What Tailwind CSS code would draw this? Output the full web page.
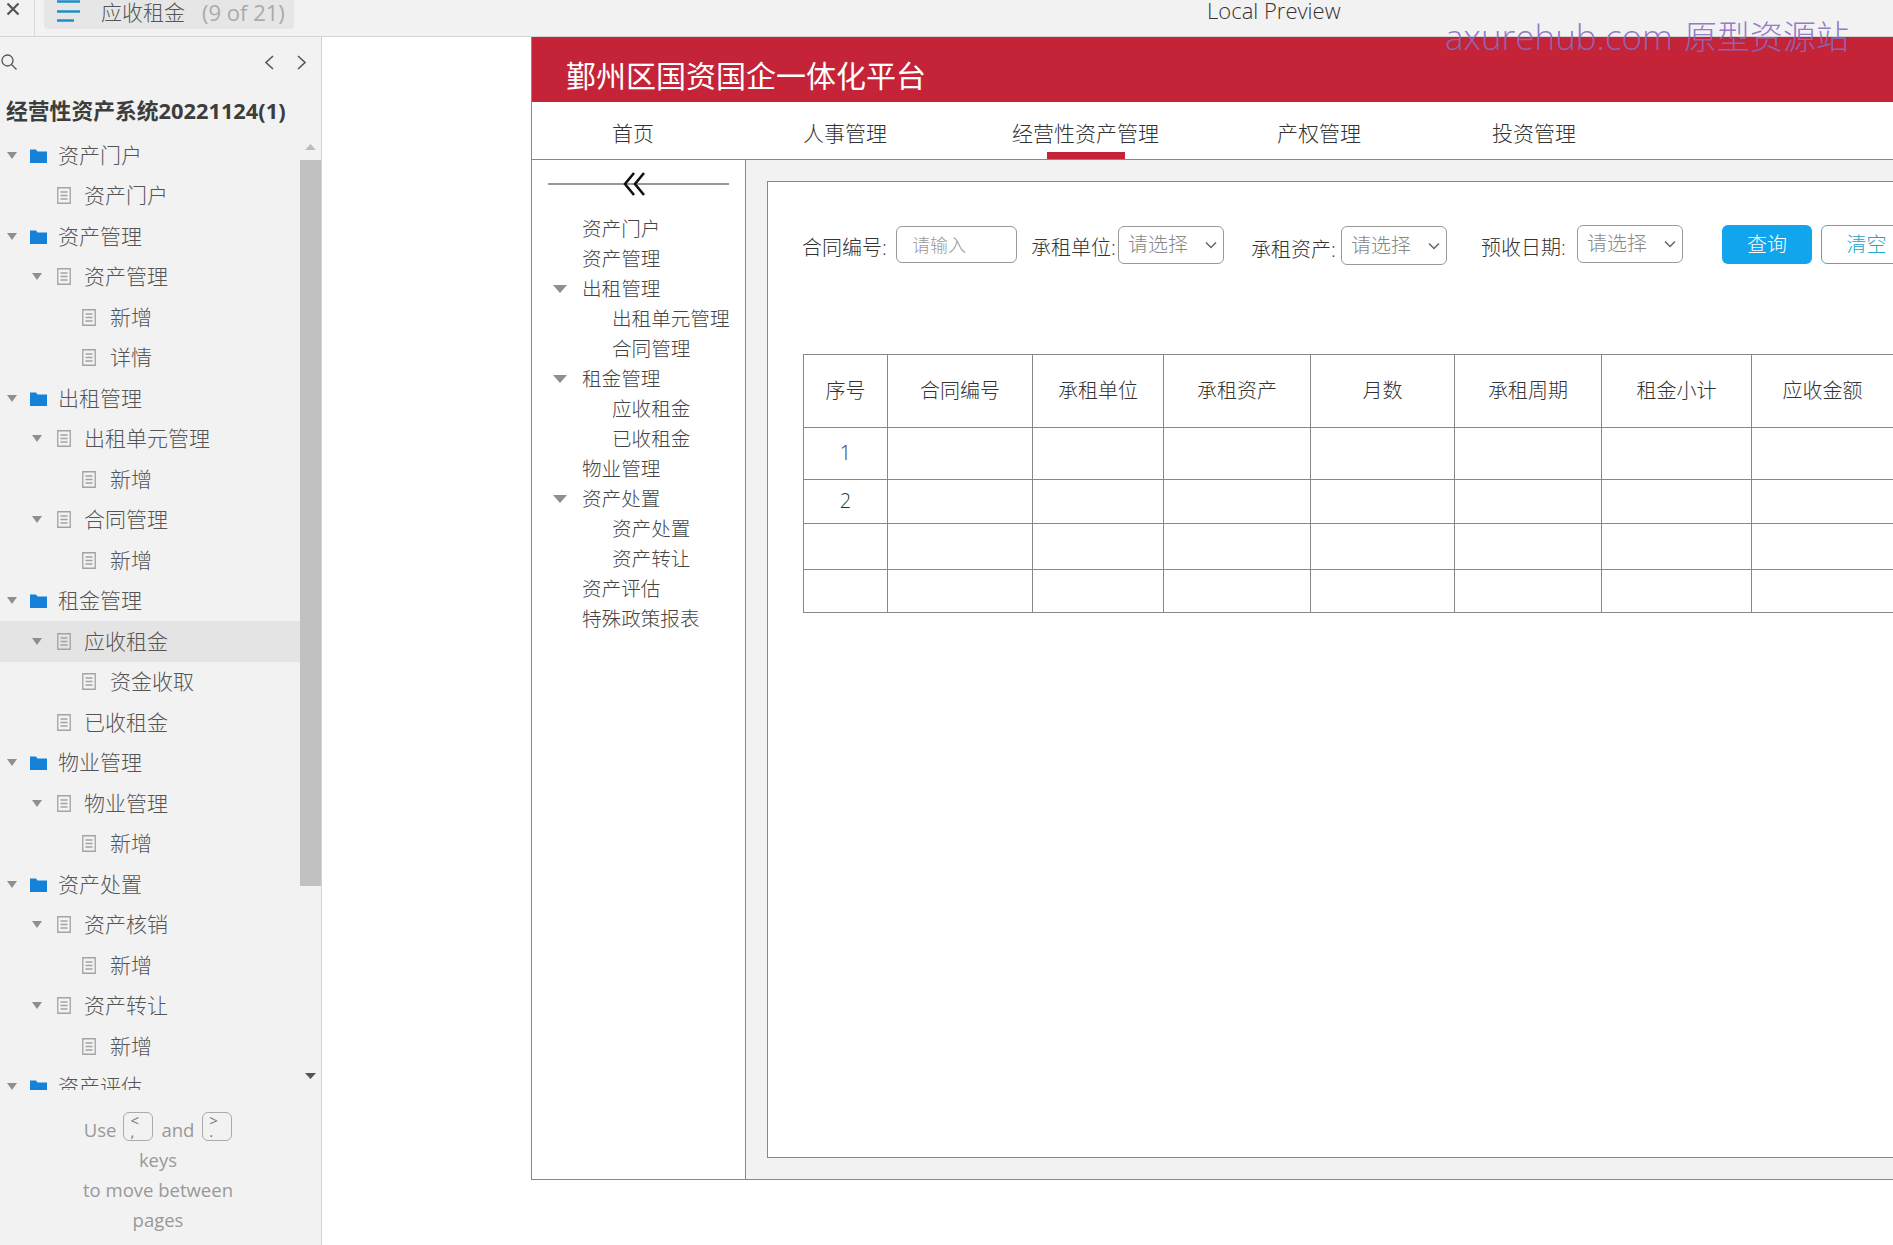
<!DOCTYPE html>
<html lang="zh-CN">

<head>
  <meta charset="UTF-8">
  <meta name="viewport" content="width=device-width, initial-scale=1.0">
  <script src="https://cdn.jsdelivr.net/npm/@tailwindcss/browser@4"></script>
  <title>应收租金</title>
</head>

<body class="bg-white">
  <svg class="hidden">
    <symbol id="tri" viewBox="0 0 10 7" preserveAspectRatio="none"><path d="M0 0h10L5 7z" fill="#8f8f8f" /></symbol>
    <symbol id="folder" viewBox="0 0 17 15"><path d="M0 1.5h6l1.5 2H17V15H0z" fill="#1581d8" /></symbol>
    <symbol id="doc" viewBox="0 0 14 17"><path d="M.75.75h12.5v15.5H.75zM3.5 5h7M3.5 8.5h7M3.5 12h7" fill="none" stroke="#a3a3a3" stroke-width="1.3" /></symbol>
    <symbol id="down" viewBox="0 0 12 8"><path d="M1 1.5l5 5 5-5" fill="none" stroke="#666" stroke-width="1.5" /></symbol>
  </svg>

  <div class="relative w-[1893px] h-[1245px] overflow-hidden flex flex-col font-['Open_Sans','Noto_Sans_CJK_SC',sans-serif] font-light text-[#444]">

    <!-- top bar -->
    <div class="h-[37px] shrink-0 flex items-start bg-[#f2f2f2] border-b border-[#d4d4d4]">
      <div class="w-[35px] h-[36px] border-r border-[#d9d9d9] pl-[6px] pt-[2px]">
        <svg width="14" height="14" viewBox="0 0 14 14"><path d="M1.5 1.5l11 11M12.5 1.5l-11 11" stroke="#555" stroke-width="2.2" /></svg>
      </div>
      <div class="ml-[9px] w-[250px] h-[29px] bg-[#e6e6e6] rounded-b flex items-start pl-[13px] text-[21px] whitespace-nowrap">
        <svg width="24" height="23" viewBox="0 0 24 23"><path d="M0 1.5h23M0 11.5h23M0 20.5h17" stroke="#1f8fc9" stroke-width="2.6" /></svg>
        <span class="ml-[20px] leading-[24px] text-[#555]">应收租金</span>
        <span class="ml-[17px] leading-[24px] text-[22px] font-normal text-[#aaa]">(9 of 21)</span>
      </div>
      <div class="ml-[913px] text-[22px] leading-[20px] text-[#333] whitespace-nowrap">Local Preview</div>
    </div>

    <div class="flex flex-1 min-h-0">
      <!-- page tree sidebar -->
      <aside class="w-[322px] shrink-0 flex flex-col bg-[#f2f2f2] border-r border-[#d4d4d4]">
        <div class="h-[49px] shrink-0 flex items-center pl-[1px] pt-[1px]">
          <svg width="16" height="16" viewBox="0 0 16 16" fill="none" stroke="#555" stroke-width="1.3"><circle cx="6.5" cy="6.5" r="5.5" /><path d="M10.5 10.5l5 5" /></svg>
          <svg width="10" height="15" viewBox="0 0 10 15" class="ml-[247px]" fill="none" stroke="#555" stroke-width="1.6"><path d="M9 1L2 7.5 9 14" /></svg>
          <svg width="10" height="15" viewBox="0 0 10 15" class="ml-[23px]" fill="none" stroke="#555" stroke-width="1.6"><path d="M1 1l7 6.5L1 14" /></svg>
        </div>
        <div class="h-[49px] shrink-0 flex items-center pl-[6px] pt-[1px] text-[21.8px] font-bold text-[#3d3d3d] whitespace-nowrap">经营性资产系统20221124(1)</div>

        <div class="h-[955px] shrink-0 flex overflow-hidden">
          <div class="w-[300px] shrink-0 text-[21px] text-[#555] whitespace-nowrap">
            <div class="h-[40.5px] flex items-center pl-[7px]"><svg class="w-[10px] h-[7px]"><use href="#tri" /></svg><svg class="ml-[13px] mr-[11px] w-[17px] h-[15px]"><use href="#folder" /></svg>资产门户</div>
            <div class="h-[40.5px] flex items-center pl-[57px]"><svg class="mr-[13px] w-[14px] h-[17px]"><use href="#doc" /></svg>资产门户</div>
            <div class="h-[40.5px] flex items-center pl-[7px]"><svg class="w-[10px] h-[7px]"><use href="#tri" /></svg><svg class="ml-[13px] mr-[11px] w-[17px] h-[15px]"><use href="#folder" /></svg>资产管理</div>
            <div class="h-[40.5px] flex items-center pl-[32px]"><svg class="w-[10px] h-[7px]"><use href="#tri" /></svg><svg class="ml-[15px] mr-[13px] w-[14px] h-[17px]"><use href="#doc" /></svg>资产管理</div>
            <div class="h-[40.5px] flex items-center pl-[82px]"><svg class="mr-[14px] w-[14px] h-[17px]"><use href="#doc" /></svg>新增</div>
            <div class="h-[40.5px] flex items-center pl-[82px]"><svg class="mr-[14px] w-[14px] h-[17px]"><use href="#doc" /></svg>详情</div>
            <div class="h-[40.5px] flex items-center pl-[7px]"><svg class="w-[10px] h-[7px]"><use href="#tri" /></svg><svg class="ml-[13px] mr-[11px] w-[17px] h-[15px]"><use href="#folder" /></svg>出租管理</div>
            <div class="h-[40.5px] flex items-center pl-[32px]"><svg class="w-[10px] h-[7px]"><use href="#tri" /></svg><svg class="ml-[15px] mr-[13px] w-[14px] h-[17px]"><use href="#doc" /></svg>出租单元管理</div>
            <div class="h-[40.5px] flex items-center pl-[82px]"><svg class="mr-[14px] w-[14px] h-[17px]"><use href="#doc" /></svg>新增</div>
            <div class="h-[40.5px] flex items-center pl-[32px]"><svg class="w-[10px] h-[7px]"><use href="#tri" /></svg><svg class="ml-[15px] mr-[13px] w-[14px] h-[17px]"><use href="#doc" /></svg>合同管理</div>
            <div class="h-[40.5px] flex items-center pl-[82px]"><svg class="mr-[14px] w-[14px] h-[17px]"><use href="#doc" /></svg>新增</div>
            <div class="h-[40.5px] flex items-center pl-[7px]"><svg class="w-[10px] h-[7px]"><use href="#tri" /></svg><svg class="ml-[13px] mr-[11px] w-[17px] h-[15px]"><use href="#folder" /></svg>租金管理</div>
            <div class="h-[40.5px] flex items-center pl-[32px] bg-[#e4e4e4]"><svg class="w-[10px] h-[7px]"><use href="#tri" /></svg><svg class="ml-[15px] mr-[13px] w-[14px] h-[17px]"><use href="#doc" /></svg>应收租金</div>
            <div class="h-[40.5px] flex items-center pl-[82px]"><svg class="mr-[14px] w-[14px] h-[17px]"><use href="#doc" /></svg>资金收取</div>
            <div class="h-[40.5px] flex items-center pl-[57px]"><svg class="mr-[13px] w-[14px] h-[17px]"><use href="#doc" /></svg>已收租金</div>
            <div class="h-[40.5px] flex items-center pl-[7px]"><svg class="w-[10px] h-[7px]"><use href="#tri" /></svg><svg class="ml-[13px] mr-[11px] w-[17px] h-[15px]"><use href="#folder" /></svg>物业管理</div>
            <div class="h-[40.5px] flex items-center pl-[32px]"><svg class="w-[10px] h-[7px]"><use href="#tri" /></svg><svg class="ml-[15px] mr-[13px] w-[14px] h-[17px]"><use href="#doc" /></svg>物业管理</div>
            <div class="h-[40.5px] flex items-center pl-[82px]"><svg class="mr-[14px] w-[14px] h-[17px]"><use href="#doc" /></svg>新增</div>
            <div class="h-[40.5px] flex items-center pl-[7px]"><svg class="w-[10px] h-[7px]"><use href="#tri" /></svg><svg class="ml-[13px] mr-[11px] w-[17px] h-[15px]"><use href="#folder" /></svg>资产处置</div>
            <div class="h-[40.5px] flex items-center pl-[32px]"><svg class="w-[10px] h-[7px]"><use href="#tri" /></svg><svg class="ml-[15px] mr-[13px] w-[14px] h-[17px]"><use href="#doc" /></svg>资产核销</div>
            <div class="h-[40.5px] flex items-center pl-[82px]"><svg class="mr-[14px] w-[14px] h-[17px]"><use href="#doc" /></svg>新增</div>
            <div class="h-[40.5px] flex items-center pl-[32px]"><svg class="w-[10px] h-[7px]"><use href="#tri" /></svg><svg class="ml-[15px] mr-[13px] w-[14px] h-[17px]"><use href="#doc" /></svg>资产转让</div>
            <div class="h-[40.5px] flex items-center pl-[82px]"><svg class="mr-[14px] w-[14px] h-[17px]"><use href="#doc" /></svg>新增</div>
            <div class="h-[40.5px] flex items-center pl-[7px]"><svg class="w-[10px] h-[7px]"><use href="#tri" /></svg><svg class="ml-[13px] mr-[11px] w-[17px] h-[15px]"><use href="#folder" /></svg>资产评估</div>
          </div>
          <!-- scrollbar -->
          <div class="w-[21px] shrink-0 flex flex-col items-center">
            <svg width="11" height="6" viewBox="0 0 11 6" class="mt-[9px]"><path d="M0 6L5.5 0 11 6z" fill="#bdbdbd" /></svg>
            <div class="mt-[10px] w-[21px] h-[726px] bg-[#c1c1c1]"></div>
            <svg width="11" height="6" viewBox="0 0 11 6" class="mt-[187px]"><path d="M0 0h11L5.5 6z" fill="#555" /></svg>
          </div>
        </div>

        <!-- keyboard hint -->
        <div class="w-[316px] text-center text-[18.5px] font-normal leading-[30px] text-[#999] pt-[25px]">
          <div class="flex items-center justify-center h-[30px]">Use
            <span class="ml-[7px] mr-[8px] -mt-[8px] w-[30px] h-[29px] border border-[#aaa] rounded-md flex flex-col items-start pl-[6px] text-[15px] leading-[11px] pt-[2px] text-[#777]"><span>&lt;</span><span>,</span></span>
            and
            <span class="ml-[8px] -mt-[8px] w-[30px] h-[29px] border border-[#aaa] rounded-md flex flex-col items-start pl-[6px] text-[15px] leading-[11px] pt-[2px] text-[#777]"><span>&gt;</span><span>.</span></span>
          </div>
          <div>keys</div>
          <div>to move between</div>
          <div>pages</div>
        </div>
      </aside>

      <!-- prototype frame -->
      <main class="flex-1 min-w-0 bg-white">
        <div class="ml-[209px] w-[1500px] h-[1143px] flex flex-col border-l border-b border-[#888]">
          <header class="h-[65px] shrink-0 flex items-center pl-[34px] pt-[12px] bg-[#c52337] text-[30px] font-normal text-white">鄞州区国资国企一体化平台</header>

          <nav class="h-[58px] shrink-0 flex border-b border-[#888] text-[21px] text-[#333] whitespace-nowrap">
            <a class="w-[202px] pl-[80px] pt-[17px] leading-[28px]">首页</a>
            <a class="w-[213px] pl-[69px] pt-[17px] leading-[28px]">人事管理</a>
            <a class="relative w-[282px] pl-[65px] pt-[17px] leading-[28px]">经营性资产管理
              <span class="absolute left-[100px] bottom-0 w-[78px] h-[7px] bg-[#c52337]"></span>
            </a>
            <a class="w-[214px] pl-[48px] pt-[17px] leading-[28px]">产权管理</a>
            <a class="pl-[49px] pt-[17px] leading-[28px]">投资管理</a>
          </nav>

          <div class="flex flex-1 min-h-0">
            <!-- left menu -->
            <div class="w-[214px] shrink-0 border-r border-[#888] text-[19.6px] text-[#444] whitespace-nowrap">
              <svg width="181" height="24" viewBox="0 0 181 24" class="ml-[16px] mt-[12px]" fill="none">
                <path d="M0 12h181" stroke="#777" stroke-width="1.4" />
                <path d="M86 1L77 12l9 11M96 1l-9 11 9 11" stroke="#111" stroke-width="2.6" />
              </svg>
              <div class="mt-[18px]">
                <div class="h-[30px] flex items-center pl-[50px]">资产门户</div>
                <div class="h-[30px] flex items-center pl-[50px]">资产管理</div>
                <div class="h-[30px] flex items-center pl-[21px]"><svg class="w-[14px] h-[8px] mr-[15px]"><use href="#tri" /></svg>出租管理</div>
                <div class="h-[30px] flex items-center pl-[80px]">出租单元管理</div>
                <div class="h-[30px] flex items-center pl-[80px]">合同管理</div>
                <div class="h-[30px] flex items-center pl-[21px]"><svg class="w-[14px] h-[8px] mr-[15px]"><use href="#tri" /></svg>租金管理</div>
                <div class="h-[30px] flex items-center pl-[80px]">应收租金</div>
                <div class="h-[30px] flex items-center pl-[80px]">已收租金</div>
                <div class="h-[30px] flex items-center pl-[50px]">物业管理</div>
                <div class="h-[30px] flex items-center pl-[21px]"><svg class="w-[14px] h-[8px] mr-[15px]"><use href="#tri" /></svg>资产处置</div>
                <div class="h-[30px] flex items-center pl-[80px]">资产处置</div>
                <div class="h-[30px] flex items-center pl-[80px]">资产转让</div>
                <div class="h-[30px] flex items-center pl-[50px]">资产评估</div>
                <div class="h-[30px] flex items-center pl-[50px]">特殊政策报表</div>
              </div>
            </div>

            <!-- content -->
            <div class="flex-1 bg-[#f2f2f2] p-[21px] pr-0">
              <div class="h-full bg-white border border-[#888] pl-[34px] pt-[43px] text-[20px] text-[#333] whitespace-nowrap">
                <div class="h-[40px] flex items-start">
                  <label class="w-[94px] leading-[46px]">合同编号:</label>
                  <input class="mt-[1px] w-[121px] h-[37px] px-[15px] border border-[#999] rounded-md text-[18px] placeholder:text-[#999]" placeholder="请输入">
                  <label class="ml-[14px] w-[87px] leading-[46px]">承租单位:</label>
                  <div class="mt-[1px] w-[106px] h-[38px] flex items-center justify-between pl-[9px] pr-[6px] border border-[#999] rounded-md text-[#888]">请选择<svg class="w-[12px] h-[8px]"><use href="#down" /></svg></div>
                  <label class="ml-[27px] mt-[2px] w-[90px] leading-[46px]">承租资产:</label>
                  <div class="mt-[1px] w-[106px] h-[39px] flex items-center justify-between pl-[9px] pr-[6px] border border-[#999] rounded-md text-[#888]">请选择<svg class="w-[12px] h-[8px]"><use href="#down" /></svg></div>
                  <label class="ml-[34px] w-[96px] leading-[46px]">预收日期:</label>
                  <div class="w-[106px] h-[38px] flex items-center justify-between pl-[9px] pr-[6px] border border-[#999] rounded-md text-[#888]">请选择<svg class="w-[12px] h-[8px]"><use href="#down" /></svg></div>
                  <button class="ml-[39px] w-[90px] h-[39px] rounded-md bg-[#10a5ec] text-white">查询</button>
                  <button class="ml-[9px] w-[91px] h-[39px] rounded-md border border-[#3fb0cf] text-[#22a6c9]">清空</button>
                </div>

                <table class="mt-[89px] ml-[1px] w-[1090px] table-fixed border-collapse text-center">
                  <colgroup>
                    <col class="w-[84px]"><col class="w-[145px]"><col class="w-[131px]"><col class="w-[147px]"><col class="w-[144px]"><col class="w-[147px]"><col class="w-[150px]"><col class="w-[142px]">
                  </colgroup>
                  <tbody>
                    <tr class="h-[73px]">
                      <td class="border border-[#888]">序号</td><td class="border border-[#888]">合同编号</td><td class="border border-[#888]">承租单位</td><td class="border border-[#888]">承租资产</td><td class="border border-[#888]">月数</td><td class="border border-[#888]">承租周期</td><td class="border border-[#888]">租金小计</td><td class="border border-[#888]">应收金额</td>
                    </tr>
                    <tr class="h-[52px]">
                      <td class="border border-[#888] pb-[2px]">1</td><td class="border border-[#888]"></td><td class="border border-[#888]"></td><td class="border border-[#888]"></td><td class="border border-[#888]"></td><td class="border border-[#888]"></td><td class="border border-[#888]"></td><td class="border border-[#888]"></td>
                    </tr>
                    <tr class="h-[44px]">
                      <td class="border border-[#888] pb-[2px]">2</td><td class="border border-[#888]"></td><td class="border border-[#888]"></td><td class="border border-[#888]"></td><td class="border border-[#888]"></td><td class="border border-[#888]"></td><td class="border border-[#888]"></td><td class="border border-[#888]"></td>
                    </tr>
                    <tr class="h-[46px]">
                      <td class="border border-[#888]"></td><td class="border border-[#888]"></td><td class="border border-[#888]"></td><td class="border border-[#888]"></td><td class="border border-[#888]"></td><td class="border border-[#888]"></td><td class="border border-[#888]"></td><td class="border border-[#888]"></td>
                    </tr>
                    <tr class="h-[43px]">
                      <td class="border border-[#888]"></td><td class="border border-[#888]"></td><td class="border border-[#888]"></td><td class="border border-[#888]"></td><td class="border border-[#888]"></td><td class="border border-[#888]"></td><td class="border border-[#888]"></td><td class="border border-[#888]"></td>
                    </tr>
                  </tbody>
                </table>
              </div>
            </div>
          </div>
        </div>
      </main>
    </div>

    <!-- watermark over the page -->
    <div class="absolute left-[1445px] top-[15px] flex items-center h-[44px] font-light text-[#8a6bc0]/90 whitespace-nowrap">
      <span class="w-[239px] text-[35px]">axurehub.com</span>
      <span class="text-[33px]">原型资源站</span>
    </div>
  </div>
</body>

</html>
